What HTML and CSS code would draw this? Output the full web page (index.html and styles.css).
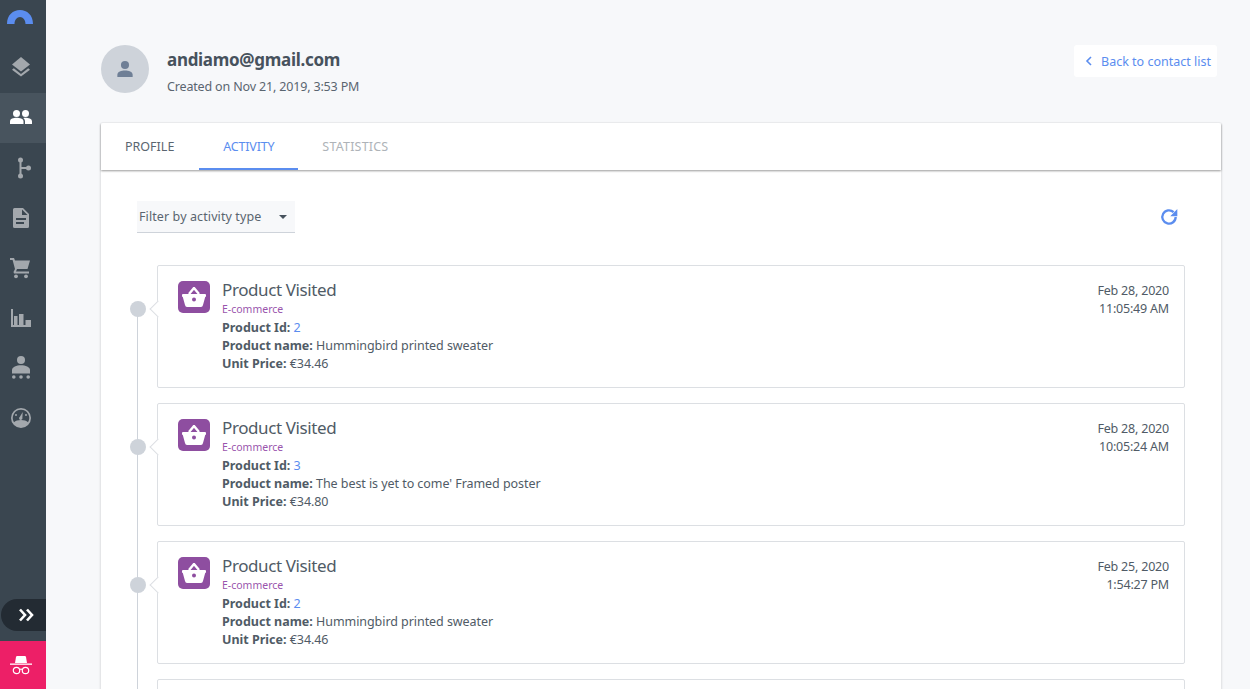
FILE: index.html
```html
<!DOCTYPE html>
<html lang="en">
<head>
<meta charset="utf-8">
<title>Contact activity</title>
<link rel="stylesheet" href="styles.css">
</head>
<body>
<div class="app">
  <nav class="sidebar">
    <div class="logo">
      <svg width="26" height="14" viewBox="0 0 26 14"><path d="M0 14C0 5 6 0 13 0s13 5 13 14h-7.500c0-4-2.500-7-5.500-7s-5.500 3-5.500 7z" fill="#5b8def"/></svg>
    </div>
    <a class="nav-item"><svg width="24" height="24" viewBox="0 0 24 24"><path d="M12 1 3 8.500 12 15.500l9-7z"/><path d="M12 18 4.800 12.300 3 13.700 12 20.500l9-6.800-1.800-1.400z"/></svg></a>
    <a class="nav-item active"><svg width="24" height="24" viewBox="0 0 24 24"><circle cx="7.500" cy="7.500" r="3.500"/><circle cx="16.500" cy="7.500" r="3.500"/><path d="M1 18v-2.500C1 12.500 4.500 11.800 7.500 11.800s7 .7 7 3.700V18z"/><path d="M16 18v-2.500c0-1.500-.6-2.700-1.700-3.500.7-.2 1.500-.2 2.200-.2 2.700 0 6.500.7 6.500 3.700V18z"/></svg></a>
    <a class="nav-item"><svg width="24" height="24" viewBox="0 0 24 24"><circle cx="11.500" cy="4" r="2.500"/><circle cx="11.500" cy="20" r="2.500"/><circle cx="19.500" cy="12" r="2.500"/><path d="M10.500 4h2v16h-2z"/><path d="M11.500 11h8v2h-8z"/></svg></a>
    <a class="nav-item"><svg width="24" height="24" viewBox="0 0 24 24"><path d="M5.500 2H14l6 6v12.500a1.500 1.500 0 0 1-1.500 1.500h-13A1.500 1.500 0 0 1 4 20.500v-17A1.500 1.500 0 0 1 5.500 2zM13 3.500V9h5.500zM7 12v2h10v-2zm0 4v2h8v-2z" fill-rule="evenodd"/></svg></a>
    <a class="nav-item"><svg width="24" height="24" viewBox="0 0 24 24"><path d="M1 2h4l1 2.500h15L18.500 13H8l-1 2.500h13V17.500H5l-.5-1.500L6 13 3.600 4H1z"/><circle cx="7" cy="20.300" r="1.900"/><circle cx="17" cy="20.300" r="1.900"/></svg></a>
    <a class="nav-item"><svg width="24" height="24" viewBox="0 0 24 24"><path d="M2 3h2v16h18v2H2z"/><path d="M5 10h3.500v9H5zM10 8h4.500v11H10zM16.500 14H22v5h-5.500z"/></svg></a>
    <a class="nav-item"><svg width="24" height="24" viewBox="0 0 24 24"><circle cx="12" cy="4" r="4"/><path d="M3 17.500v-3.500C3 11 7.500 9.300 12 9.300s9 1.700 9 4.700v3.500z"/><circle cx="4.800" cy="21" r="1.800"/><circle cx="12" cy="21" r="1.800"/><circle cx="19.200" cy="21" r="1.800"/></svg></a>
    <a class="nav-item"><svg width="24" height="24" viewBox="0 0 24 24"><path d="M12 2a10 10 0 1 0 0 20 10 10 0 0 0 0-20zm0 1.800a8.200 8.200 0 0 1 7 12.500C17.500 14.800 15 14 12 14s-5.500.8-7 2.300a8.200 8.200 0 0 1 7-12.500z" fill-rule="evenodd"/><path d="M13.700 6l-2.800 4.800a1.700 1.700 0 1 0 2.500 1zM7 8a1 1 0 1 0 0 2 1 1 0 0 0 0-2zM17 8a1 1 0 1 0 0 2 1 1 0 0 0 0-2z"/></svg></a>
    <div class="side-spacer"></div>
    <div class="expand">
      <svg width="16" height="14" viewBox="0 0 16 14"><path d="M2 1.500 7 7l-5 5.500M9 1.500 14 7l-5 5.500" fill="none" stroke="#fff" stroke-width="2.600"/></svg>
    </div>
    <div class="incognito">
      <svg width="22" height="20" viewBox="0 0 22 20"><path d="M5 8 6 2q.2-1 1.200-1h7.600q1 0 1.200 1l1 6z" fill="#fff"/><path d="M0 8.500h22v1.300H0z" fill="#fff"/><g fill="none" stroke="#fff" stroke-width="1.200"><circle cx="6.500" cy="15.500" r="3.200"/><circle cx="15.500" cy="15.500" r="3.200"/><path d="M9.500 14.500c1-.6 2-.6 3 0"/></g></svg>
    </div>
  </nav>

  <main class="main">
    <header class="head">
      <div class="avatar">
        <svg width="18" height="18" viewBox="0 0 20 20"><circle cx="10" cy="5.500" r="4.500"/><path d="M1.500 19v-2.500C1.500 13 6 11.800 10 11.800s8.500 1.200 8.500 4.700V19z"/></svg>
      </div>
      <div class="who">
        <h1 class="email">andiamo@gmail.com</h1>
        <p class="created">Created on Nov 21, 2019, 3:53 PM</p>
      </div>
      <a class="back"><svg width="8" height="10" viewBox="0 0 8 10"><path d="M6 1 2 5l4 4" fill="none" stroke="#5b8def" stroke-width="1.600"/></svg><span>Back to contact list</span></a>
    </header>

    <section class="card">
      <div class="tabs">
        <a class="tab tab-dark">PROFILE</a>
        <a class="tab tab-active">ACTIVITY</a>
        <a class="tab tab-muted">STATISTICS</a>
      </div>
      <div class="toolbar">
        <div class="filter"><span>Filter by activity type</span><i class="caret"></i></div>
        <svg class="refresh" width="20" height="20" viewBox="0 0 24 24"><path d="M20 12a8 8 0 1 1-2.500-5.800" fill="none" stroke="#5b8def" stroke-width="2.800"/><path d="M22 2.500v8.500h-8.500z" fill="#5b8def"/></svg>
      </div>
      <div class="timeline">
        <article class="event">
          <span class="dot"></span>
          <div class="badge"><svg width="24" height="20" viewBox="0 0 24 20"><path d="M1 7h22q1 0 1 1v1q0 .8-.8 1L21 18q-.4 2-2 2H5q-1.600 0-2-2L.8 10Q0 9.800 0 9V8q0-1 1-1z" fill="#fff"/><path d="m7 7 5-6 5 6" fill="none" stroke="#fff" stroke-width="2.400"/><circle cx="12" cy="12.500" r="2" fill="#8e4ea0"/></svg></div>
          <div class="body">
            <h2 class="name">Product Visited</h2>
            <div class="cat">E-commerce</div>
            <div class="row"><b>Product Id:</b> <a class="link">2</a></div>
            <div class="row"><b>Product name:</b> Hummingbird printed sweater</div>
            <div class="row"><b>Unit Price:</b> €34.46</div>
          </div>
          <div class="when">Feb 28, 2020<br>11:05:49 AM</div>
        </article>
        <article class="event">
          <span class="dot"></span>
          <div class="badge"><svg width="24" height="20" viewBox="0 0 24 20"><path d="M1 7h22q1 0 1 1v1q0 .8-.8 1L21 18q-.4 2-2 2H5q-1.600 0-2-2L.8 10Q0 9.800 0 9V8q0-1 1-1z" fill="#fff"/><path d="m7 7 5-6 5 6" fill="none" stroke="#fff" stroke-width="2.400"/><circle cx="12" cy="12.500" r="2" fill="#8e4ea0"/></svg></div>
          <div class="body">
            <h2 class="name">Product Visited</h2>
            <div class="cat">E-commerce</div>
            <div class="row"><b>Product Id:</b> <a class="link">3</a></div>
            <div class="row"><b>Product name:</b> The best is yet to come' Framed poster</div>
            <div class="row"><b>Unit Price:</b> €34.80</div>
          </div>
          <div class="when">Feb 28, 2020<br>10:05:24 AM</div>
        </article>
        <article class="event">
          <span class="dot"></span>
          <div class="badge"><svg width="24" height="20" viewBox="0 0 24 20"><path d="M1 7h22q1 0 1 1v1q0 .8-.8 1L21 18q-.4 2-2 2H5q-1.600 0-2-2L.8 10Q0 9.800 0 9V8q0-1 1-1z" fill="#fff"/><path d="m7 7 5-6 5 6" fill="none" stroke="#fff" stroke-width="2.400"/><circle cx="12" cy="12.500" r="2" fill="#8e4ea0"/></svg></div>
          <div class="body">
            <h2 class="name">Product Visited</h2>
            <div class="cat">E-commerce</div>
            <div class="row"><b>Product Id:</b> <a class="link">2</a></div>
            <div class="row"><b>Product name:</b> Hummingbird printed sweater</div>
            <div class="row"><b>Unit Price:</b> €34.46</div>
          </div>
          <div class="when">Feb 25, 2020<br>1:54:27 PM</div>
        </article>
        <article class="event"></article>
      </div>
    </section>
  </main>
</div>
</body>
</html>
```

FILE: styles.css
```css
* { box-sizing: border-box; }
html, body { margin: 0; height: 100%; overflow: hidden; }
body { font-family: "Noto Sans", sans-serif; color: #505b66; background: #f7f8fa; font-size: 12.500px; }
h1, h2, p { margin: 0; }

.app { display: flex; height: 689px; overflow: hidden; }

.sidebar { width: 46px; flex: none; background: #3a4650; display: flex; flex-direction: column; }
.logo { height: 43px; display: flex; justify-content: center; padding: 10px 6px 0 0; }
.nav-item { height: 50px; display: flex; align-items: center; justify-content: center; padding-right: 4px; fill: #a3a8ad; }
.nav-item.active { background: #48545e; fill: #fff; }
.side-spacer { flex: 1; }
.expand { height: 32px; margin: 0 0 10px 1px; background: #232b33; border-radius: 16px 0 0 16px; display: flex; align-items: center; justify-content: center; padding-left: 5px; }
.incognito { height: 48px; background: #ed1f67; display: flex; align-items: center; justify-content: center; padding-right: 4px; }

.main { flex: 1; min-width: 0; padding: 45px 29px 0 55px; }

.head { display: flex; align-items: flex-start; height: 78px; margin-right: 4px; }
.avatar { width: 48px; height: 48px; border-radius: 50%; background: #ced3da; display: flex; align-items: center; justify-content: center; fill: #6f7f96; flex: none; }
.who { margin-left: 18px; flex: 1; }
.email { font-size: 17px; font-weight: 700; line-height: 28px; padding-top: 1px; letter-spacing: -.3px; color: #47525d; }
.created { font-size: 12.500px; line-height: 18px; margin-top: 4px; letter-spacing: -.16px; color: #5a6570; }
.back { height: 32px; width: 143px; background: #fff; border-radius: 3px; display: flex; align-items: center; gap: 8px; padding-left: 11px; color: #5b8def; font-size: 12.500px; }

.card { background: #fff; box-shadow: 0 1px 3px rgba(0, 0, 0, .2); border-radius: 2px; height: 640px; }
.tabs { height: 47px; display: flex; box-shadow: 0 1px 2px rgba(0, 0, 0, .4); position: relative; }
.tab { height: 47px; display: flex; align-items: center; font-size: 12.500px; padding: 0 24px; }
.tab-dark { color: #5a6570; padding-right: 25px; }
.tab-active { color: #5b8def; border-bottom: 2px solid #5b8def; padding-top: 1px; letter-spacing: -.2px; }
.tab-muted { color: #aeb3b8; letter-spacing: .2px; }

.toolbar { display: flex; justify-content: space-between; align-items: center; padding: 31px 42px 0 36px; }
.filter { width: 158px; height: 32px; background: #f7f8fa; border-bottom: 1px solid #ced3da; display: flex; align-items: center; justify-content: space-between; padding: 0 8px 0 2px; color: #5a6570; letter-spacing: .1px; }
.caret { width: 0; height: 0; border-left: 4px solid transparent; border-right: 4px solid transparent; border-top: 4px solid #47525d; }
.refresh { display: block; }

.timeline { position: relative; margin: 32px 36px 0 56px; display: flex; flex-direction: column; gap: 15px; }
.timeline::before { content: ""; position: absolute; left: -20px; top: 43px; bottom: 0; width: 1px; background: #ced3da; }
.event { position: relative; height: 123px; background: #fff; border: 1px solid #dcdfe3; border-radius: 2px; padding: 15px 15px 0 20px; display: flex; align-items: flex-start; }
.event::before { content: ""; position: absolute; left: -6px; top: 37px; width: 11px; height: 11px; background: #fff; border-left: 1px solid #dcdfe3; border-bottom: 1px solid #dcdfe3; transform: rotate(45deg); }
.dot { position: absolute; left: -28px; top: 35px; width: 16px; height: 16px; border-radius: 50%; background: #ced3da; }
.badge { width: 32px; height: 32px; border-radius: 5px; background: #8e4ea0; display: flex; align-items: center; justify-content: center; flex: none; }
.body { margin: -1px 0 0 12px; flex: 1; }
.name { font-size: 17px; font-weight: 400; line-height: 20px; letter-spacing: -.4px; color: #505b66; }
.cat { font-size: 10.500px; line-height: 18px; margin-bottom: 1px; color: #9a55ad; }
.row { font-size: 12.500px; line-height: 18px; letter-spacing: -.06px; color: #505b66; }
.row b { font-weight: 700; letter-spacing: 0; }
.link { color: #5b8def; }
.when { text-align: right; font-size: 12.500px; line-height: 18px; padding-top: 1px; letter-spacing: -.2px; color: #505b66; }
```
